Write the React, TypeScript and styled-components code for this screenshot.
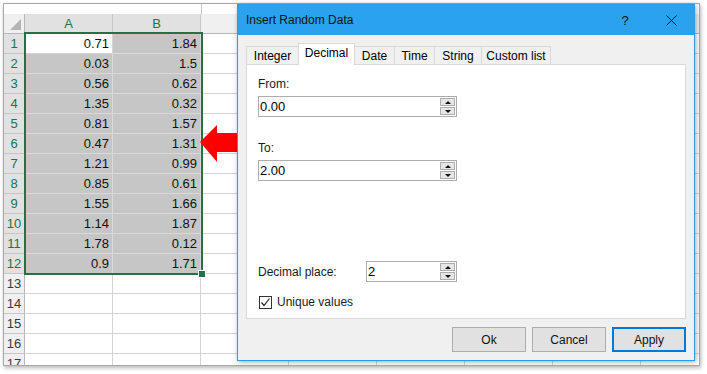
import React from "react";
import styled, { createGlobalStyle } from "styled-components";

const GlobalStyle = createGlobalStyle`
  html, body { margin: 0; padding: 0; background: #fff; }
  body { font-family: "Liberation Sans", Arial, sans-serif; }
`;

const Desktop = styled.div`
  position: relative;
  width: 707px;
  height: 374px;
  overflow: hidden;
  background: #fff;
  padding: 3px 0 0 3px;
  box-sizing: border-box;
`;

const SheetWindow = styled.div`
  width: 697px;
  height: 363px;
  box-sizing: border-box;
  border: 1px solid #a9a9a9;
  box-shadow: 1px 2px 4px rgba(0, 0, 0, 0.28);
  overflow: hidden;
  display: flex;
  flex-direction: column;
  background: #fff;
`;

const TopStrip = styled.div`
  height: 10px;
  flex: none;
  display: grid;
  grid-template-columns: 198px 1fr;
  & > div:first-child { border-right: 1px solid #c8c8c8; }
`;

const GridWrap = styled.div`
  position: relative;
  flex: 1;
  overflow: hidden;
`;

const Grid = styled.div`
  display: grid;
  grid-template-columns: 21px repeat(8, 88px);
  grid-auto-rows: 20px;
`;

const Corner = styled.div`
  position: relative;
  background: #f0f0f0;
  border-right: 1px solid #b8b8b8;
  border-bottom: 1px solid #b8b8b8;
  box-sizing: border-box;
  &::after {
    content: "";
    position: absolute;
    right: 3px;
    bottom: 3px;
    border-style: solid;
    border-width: 0 0 11px 11px;
    border-color: transparent transparent #b4b4b4 transparent;
  }
`;

const ColHead = styled.div<{ $sel?: boolean }>`
  background: ${(p) => (p.$sel ? "#e1e1e1" : "#f0f0f0")};
  color: ${(p) => (p.$sel ? "#217346" : "#444")};
  border-right: 1px solid #c6c6c6;
  border-bottom: 1px solid ${(p) => (p.$sel ? "#217346" : "#b8b8b8")};
  box-sizing: border-box;
  font-size: 13px;
  display: flex;
  align-items: center;
  justify-content: center;
`;

const RowHead = styled.div<{ $sel?: boolean }>`
  background: ${(p) => (p.$sel ? "#e1e1e1" : "#f0f0f0")};
  color: ${(p) => (p.$sel ? "#217346" : "#3a3a3a")};
  border-right: 1px solid ${(p) => (p.$sel ? "#217346" : "#b8b8b8")};
  border-bottom: 1px solid #c6c6c6;
  box-sizing: border-box;
  font-size: 13px;
  display: flex;
  align-items: center;
  justify-content: center;
`;

const Cell = styled.div<{ $fill?: boolean }>`
  background: ${(p) => (p.$fill ? "#c6c6c6" : "#fff")};
  border-right: 1px solid ${(p) => (p.$fill ? "#dadada" : "#d4d4d4")};
  border-bottom: 1px solid ${(p) => (p.$fill ? "#dadada" : "#d4d4d4")};
  box-sizing: border-box;
  font-size: 13px;
  color: #111;
  display: flex;
  align-items: center;
  justify-content: flex-end;
  padding-right: 3px;
`;

const Selection = styled.div`
  position: absolute;
  left: 20px;
  top: 18px;
  width: 179px;
  height: 243px;
  border: 2px solid #217346;
  box-sizing: border-box;
  pointer-events: none;
`;

const FillHandle = styled.div`
  position: absolute;
  right: -5px;
  bottom: -5px;
  width: 6px;
  height: 6px;
  background: #217346;
  border: 1px solid #fff;
`;

const Arrow = styled.svg`
  position: absolute;
  left: 199px;
  top: 124px;
`;

const Dialog = styled.div`
  position: absolute;
  left: 237px;
  top: 4px;
  width: 458px;
  height: 357px;
  box-sizing: border-box;
  border: 1px solid #2b9de8;
  background: #f0f0f0;
  box-shadow: 1px 1px 5px rgba(0, 0, 0, 0.35);
  display: flex;
  flex-direction: column;
  font-size: 12px;
  color: #000;
`;

const TitleBar = styled.div`
  height: 30px;
  flex: none;
  background: #2aa2ee;
  display: flex;
  align-items: center;
  padding-left: 8px;
`;

const Title = styled.div`
  flex: 1;
  font-size: 12px;
  color: #111;
`;

const TitleButton = styled.div`
  width: 46px;
  height: 30px;
  display: flex;
  align-items: center;
  justify-content: center;
  font-size: 13px;
  color: #111;
`;

const Body = styled.div`
  flex: 1;
  display: flex;
  flex-direction: column;
  padding: 8px 8px 0 8px;
`;

const Tabs = styled.div`
  height: 21px;
  display: flex;
  align-items: flex-end;
`;

const Tab = styled.div<{ $w: number; $active?: boolean }>`
  width: ${(p) => p.$w}px;
  height: ${(p) => (p.$active ? 22 : 18)}px;
  box-sizing: border-box;
  border: 1px solid #d9d9d9;
  border-bottom: none;
  margin-left: -1px;
  background: ${(p) => (p.$active ? "#fff" : "#f0f0f0")};
  position: relative;
  top: ${(p) => (p.$active ? 1 : 0)}px;
  z-index: ${(p) => (p.$active ? 1 : 0)};
  display: flex;
  align-items: center;
  justify-content: center;
  padding-bottom: ${(p) => (p.$active ? 3 : 0)}px;
  &:first-child { margin-left: 0; }
`;

const Panel = styled.div`
  height: 255px;
  box-sizing: border-box;
  border: 1px solid #d9d9d9;
  background: #fff;
  padding: 0 0 0 11px;
  display: flex;
  flex-direction: column;
  align-items: flex-start;
`;

const Label = styled.div<{ $mt: number }>`
  margin-top: ${(p) => p.$mt}px;
  height: 15px;
  line-height: 15px;
  color: #1a1a1a;
`;

const SpinBox = styled.div<{ $w: number; $mt?: number }>`
  margin-top: ${(p) => p.$mt ?? 0}px;
  width: ${(p) => p.$w}px;
  height: 21px;
  box-sizing: border-box;
  border: 1px solid #acacac;
  background: #fff;
  display: flex;
  align-items: center;
  padding: 0 1px 0 1px;
  font-size: 13px;
  color: #000;
`;

const SpinValue = styled.div`
  flex: 1;
`;

const SpinButtons = styled.div`
  width: 15px;
  height: 17px;
  display: flex;
  flex-direction: column;
  gap: 1px;
`;

const SpinHalf = styled.div<{ $down?: boolean }>`
  flex: 1;
  box-sizing: border-box;
  border: 1px solid #adadad;
  background: #e6e6e6;
  display: flex;
  align-items: center;
  justify-content: center;
  &::after {
    content: "";
    border-left: 3px solid transparent;
    border-right: 3px solid transparent;
    ${(p) => (p.$down ? "border-top: 3px solid #111;" : "border-bottom: 3px solid #111;")}
  }
`;

const Row = styled.div<{ $mt: number }>`
  margin-top: ${(p) => p.$mt}px;
  width: 199px;
  display: flex;
  align-items: center;
  justify-content: space-between;
  color: #1a1a1a;
`;

const CheckRow = styled.div`
  margin-top: 13px;
  display: flex;
  align-items: center;
  gap: 5px;
  margin-left: 1px;
  color: #1a1a1a;
`;

const CheckBox = styled.div`
  width: 13px;
  height: 13px;
  box-sizing: border-box;
  border: 1px solid #333;
  background: #fff;
  display: flex;
  align-items: center;
  justify-content: center;
`;

const Buttons = styled.div`
  margin-top: 8px;
  display: flex;
  justify-content: flex-end;
  gap: 6px;
`;

const Button = styled.div<{ $default?: boolean }>`
  width: 74px;
  height: 25px;
  box-sizing: border-box;
  border: ${(p) => (p.$default ? "2px solid #0078d7" : "1px solid #adadad")};
  background: #e1e1e1;
  display: flex;
  align-items: center;
  justify-content: center;
  font-size: 12px;
  color: #111;
`;

const colA = ["0.71", "0.03", "0.56", "1.35", "0.81", "0.47", "1.21", "0.85", "1.55", "1.14", "1.78", "0.9"];
const colB = ["1.84", "1.5", "0.62", "0.32", "1.57", "1.31", "0.99", "0.61", "1.66", "1.87", "0.12", "1.71"];
// columns C..H sit under the dialog, so their header letters never show
const headers = ["A", "B", "", "", "", "", "", ""];

function Spin({ value, width, mt }: { value: string; width: number; mt?: number }) {
  return (
    <SpinBox $w={width} $mt={mt}>
      <SpinValue>{value}</SpinValue>
      <SpinButtons>
        <SpinHalf />
        <SpinHalf $down />
      </SpinButtons>
    </SpinBox>
  );
}

export default function App() {
  const rows = Array.from({ length: 17 }, (_, i) => i);
  return (
    <Desktop>
      <GlobalStyle />
      <SheetWindow>
        <TopStrip>
          <div />
          <div />
        </TopStrip>
        <GridWrap>
          <Grid>
            <Corner />
            {headers.map((l, i) => (
              <ColHead key={i} $sel={i < 2}>{l}</ColHead>
            ))}
            {rows.map((r) => (
              <React.Fragment key={r}>
                <RowHead $sel={r < 12}>{r + 1}</RowHead>
                <Cell $fill={r < 12 && r > 0}>{colA[r]}</Cell>
                <Cell $fill={r < 12}>{colB[r]}</Cell>
                {headers.slice(2).map((_, c) => (
                  <Cell key={c} />
                ))}
              </React.Fragment>
            ))}
          </Grid>
          <Selection>
            <FillHandle />
          </Selection>
        </GridWrap>
      </SheetWindow>

      <Arrow width="41" height="40" viewBox="0 0 41 40">
        <polygon points="1,18 18,1 18,9 41,9 41,28 18,28 18,38" fill="#ff0000" />
      </Arrow>

      <Dialog>
        <TitleBar>
          <Title>Insert Random Data</Title>
          <TitleButton>?</TitleButton>
          <TitleButton>
            <svg width="11" height="11" viewBox="0 0 11 11">
              <path d="M0.5 0.5 L10.5 10.5 M10.5 0.5 L0.5 10.5" stroke="#111" strokeWidth="1" />
            </svg>
          </TitleButton>
        </TitleBar>
        <Body>
          <Tabs>
            <Tab $w={53}>Integer</Tab>
            <Tab $w={57} $active>Decimal</Tab>
            <Tab $w={41}>Date</Tab>
            <Tab $w={41}>Time</Tab>
            <Tab $w={48}>String</Tab>
            <Tab $w={70}>Custom list</Tab>
          </Tabs>
          <Panel>
            <Label $mt={12}>From:</Label>
            <Spin value="0.00" width={199} mt={4} />
            <Label $mt={24}>To:</Label>
            <Spin value="2.00" width={199} mt={4} />
            <Row $mt={80}>
              <span>Decimal place:</span>
              <Spin value="2" width={91} />
            </Row>
            <CheckRow>
              <CheckBox>
                <svg width="11" height="11" viewBox="0 0 11 11">
                  <path d="M1.5 5.5 L4 8.5 L9.5 1.5" stroke="#222" strokeWidth="1.2" fill="none" />
                </svg>
              </CheckBox>
              Unique values
            </CheckRow>
          </Panel>
          <Buttons>
            <Button>Ok</Button>
            <Button>Cancel</Button>
            <Button $default>Apply</Button>
          </Buttons>
        </Body>
      </Dialog>
    </Desktop>
  );
}
